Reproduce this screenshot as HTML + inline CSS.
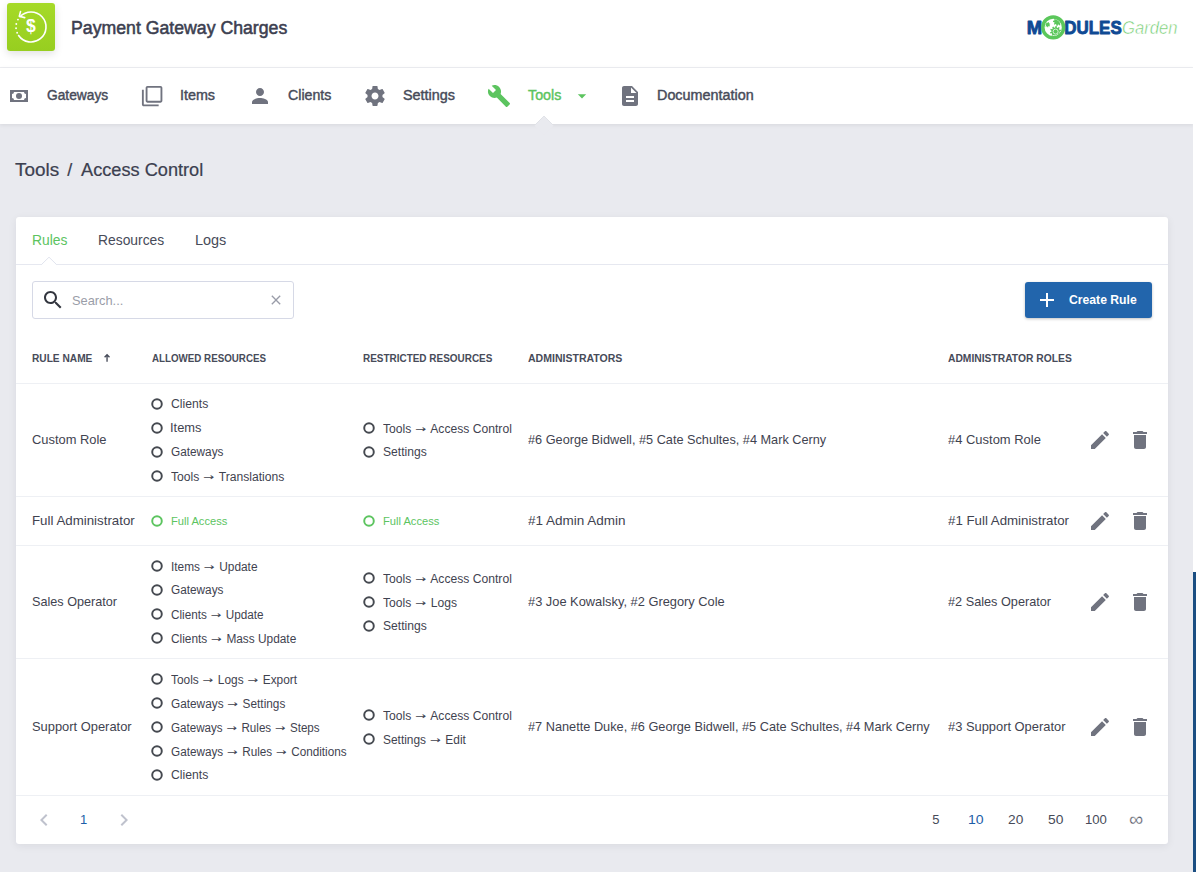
<!DOCTYPE html><html><head><meta charset="utf-8"><title>Payment Gateway Charges</title><style>

html,body{margin:0;padding:0}
body{width:1196px;height:872px;overflow:hidden;position:relative;background:#e9eaef;font-family:"Liberation Sans",sans-serif;}
.t{position:absolute;white-space:pre;line-height:20px;height:20px;}
.ic{position:absolute;display:block}
.ar{font-family:"DejaVu Sans",sans-serif;font-size:13px;display:inline-block;line-height:1;transform:scaleY(.72);transform-origin:50% 60%;vertical-align:baseline;letter-spacing:0;margin:0 1px 0 0.8px}
.abs{position:absolute}

</style></head><body>
<div class="abs" style="left:0;top:0;width:1193px;height:67px;background:#fff"></div>
<div class="abs" style="left:0;top:67px;width:1193px;height:1px;background:#eeeff3"></div>
<div class="abs" style="left:0;top:68px;width:1193px;height:56px;background:#fff;box-shadow:0 1px 4px rgba(30,32,45,.09)"></div>
<div class="abs" style="left:1193px;top:0;width:3px;height:572px;background:#fff"></div>
<div class="abs" style="left:1193px;top:572px;width:3px;height:300px;background:#1b4e82"></div>
<div class="abs" style="left:7px;top:3px;width:48px;height:48px;border-radius:3px;background:linear-gradient(#a6da28,#97ce20);box-shadow:0 3px 8px rgba(0,0,0,.12)"></div>
<svg class="ic" style="left:7px;top:3px" width="48" height="48" viewBox="0 0 48 48">
<path d="M13.03 13.77 A15 15 0 1 1 11.62 32.47" fill="none" stroke="#fff" stroke-width="1.6" stroke-linecap="round"/>
<circle cx="10.13" cy="29.72" r="0.95" fill="#fff"/><circle cx="9.06" cy="25.31" r="0.95" fill="#fff"/><circle cx="9.30" cy="21.01" r="0.95" fill="#fff"/><circle cx="10.96" cy="16.59" r="0.95" fill="#fff"/>
<path d="M13.500 8.600 L12.300 13.300 L17.700 14.600" fill="none" stroke="#fff" stroke-width="1.6" stroke-linecap="round" stroke-linejoin="round"/>
<text x="23.800" y="29.200" text-anchor="middle" font-family="Liberation Sans, sans-serif" font-weight="700" font-size="17.5" fill="#fff">$</text>
</svg>
<svg class="ic" style="left:1024px;top:12px" width="158" height="32" viewBox="0 0 158 32">
<defs><clipPath id="gc"><circle cx="29.200" cy="15.400" r="8.300"/></clipPath></defs>
<g font-family="Liberation Sans, sans-serif" font-weight="700" font-size="19.200" fill="#0f4a94" stroke="#0f4a94" stroke-width="0.9" stroke-linejoin="round">
<text x="2.700" y="21.600" textLength="15.400" lengthAdjust="spacingAndGlyphs">M</text>
<text x="40.300" y="21.600" textLength="57.400" lengthAdjust="spacingAndGlyphs">DULES</text>
</g>
<circle cx="29.200" cy="15.400" r="10.350" fill="#fff" stroke="#5bc75b" stroke-width="3.500"/>
<g clip-path="url(#gc)" fill="#5bc75b"><path d="M35.72 20.43L36.96 21.22L36.48 22.35L35.05 22.00L34.44 22.69L34.98 24.06L33.93 24.69L32.98 23.57L32.08 23.77L31.71 25.20L30.49 25.09L30.38 23.62L29.53 23.26L28.40 24.20L27.47 23.39L28.25 22.14L27.78 21.34L26.31 21.44L26.04 20.24L27.40 19.68L27.48 18.77L26.24 17.98L26.72 16.85L28.15 17.20L28.76 16.51L28.22 15.14L29.27 14.51L30.22 15.63L31.12 15.43L31.49 14.00L32.71 14.11L32.82 15.58L33.67 15.94L34.80 15.00L35.73 15.81L34.95 17.06L35.42 17.86L36.89 17.76L37.16 18.96L35.80 19.52z"/><path d="M36.98 9.64L38.10 10.24L37.74 11.30L36.49 11.09L35.97 11.73L36.45 12.91L35.49 13.49L34.67 12.53L33.85 12.69L33.46 13.90L32.35 13.73L32.34 12.46L31.61 12.06L30.54 12.73L29.80 11.89L30.61 10.91L30.30 10.14L29.05 9.96L29.02 8.84L30.27 8.61L30.54 7.82L29.69 6.88L30.39 6.01L31.49 6.63L32.20 6.20L32.16 4.93L33.26 4.71L33.70 5.90L34.52 6.03L35.30 5.03L36.29 5.57L35.86 6.76L36.41 7.39L37.65 7.12L38.06 8.17L36.96 8.81z"/><path d="M25.42 13.16L26.05 13.74L25.58 14.44L24.81 14.07L24.29 14.37L24.24 15.22L23.40 15.29L23.20 14.46L22.65 14.24L21.95 14.73L21.37 14.12L21.90 13.45L21.72 12.88L20.90 12.64L21.02 11.80L21.88 11.80L22.21 11.31L21.89 10.51L22.62 10.09L23.15 10.75L23.74 10.71L24.16 9.96L24.95 10.26L24.76 11.10L25.17 11.53L26.02 11.39L26.27 12.20L25.50 12.57z"/>
<circle cx="31.600" cy="19.600" r="2.500" fill="none" stroke="#fff" stroke-width="0.700"/></g>
<text x="98" y="21.800" font-family="Liberation Sans, sans-serif" font-style="italic" font-weight="400" font-size="18.500" fill="#6ecb6c" textLength="55.500" lengthAdjust="spacingAndGlyphs" stroke="#fff" stroke-width="0.550">Garden</text>
</svg>
<svg class="ic" style="left:7px;top:84px" width="24" height="24" viewBox="0 0 24 24"><path fill="#70737f" fill-rule="evenodd" d="M3 6h18v12H3zM7 8a2 2 0 0 1-2 2v4a2 2 0 0 1 2 2h10a2 2 0 0 1 2-2v-4a2 2 0 0 1-2-2z"/><circle cx="12" cy="12" r="3" fill="#70737f"/></svg>
<svg class="ic" style="left:141.2px;top:84.7px" width="22.3" height="22.3" viewBox="0 0 24 24"><path fill="#70737f" d="M3 5H1v16c0 1.100.9 2 2 2h16v-2H3V5zm18-4H7c-1.100 0-2 .9-2 2v14c0 1.100.9 2 2 2h14c1.100 0 2-.9 2-2V3c0-1.100-.9-2-2-2zm0 16H7V3h14v14z"/></svg>
<svg class="ic" style="left:247.8px;top:83.9px" width="24" height="24" viewBox="0 0 24 24"><path fill="#70737f" d="M12 12c2.21 0 4-1.79 4-4s-1.79-4-4-4-4 1.79-4 4 1.79 4 4 4zm0 2c-2.67 0-8 1.34-8 4v2h16v-2c0-2.66-5.33-4-8-4z"/></svg>
<svg class="ic" style="left:362.8px;top:83.7px" width="24" height="24" viewBox="0 0 24 24"><path fill="#70737f" d="M19.43 12.98c.04-.32.07-.64.07-.98s-.03-.66-.07-.98l2.11-1.65c.19-.15.24-.42.12-.64l-2-3.46c-.12-.22-.39-.3-.61-.22l-2.49 1c-.52-.4-1.08-.73-1.69-.98l-.38-2.65C14.46 2.18 14.25 2 14 2h-4c-.25 0-.46.18-.49.42l-.38 2.65c-.61.25-1.17.59-1.69.98l-2.49-1c-.23-.09-.49 0-.61.22l-2 3.46c-.13.22-.07.49.12.64l2.11 1.65c-.04.32-.07.65-.07.98s.03.66.07.98l-2.11 1.65c-.19.15-.24.42-.12.64l2 3.46c.12.22.39.3.61.22l2.49-1c.52.4 1.08.73 1.69.98l.38 2.65c.03.24.24.42.49.42h4c.25 0 .46-.18.49-.42l.38-2.65c.61-.25 1.17-.59 1.69-.98l2.49 1c.23.09.49 0 .61-.22l2-3.46c.12-.22.07-.49-.12-.64l-2.11-1.65zM12 15.5c-1.93 0-3.5-1.57-3.5-3.5s1.57-3.5 3.5-3.5 3.5 1.57 3.5 3.5-1.57 3.5-3.5 3.5z"/></svg>
<svg class="ic" style="left:486.5px;top:84px" width="24" height="24" viewBox="0 0 24 24"><path fill="#5cc45f" d="M22.7 19l-9.1-9.1c.9-2.3.4-5-1.5-6.9-2-2-5-2.4-7.400-1.300L9 6 6 9 1.600 4.700C.4 7.100.9 10.100 2.900 12.100c1.900 1.900 4.600 2.400 6.900 1.500l9.100 9.100c.4.400 1 .400 1.400 0l2.300-2.300c.5-.4.5-1.100.1-1.400z"/></svg>
<svg class="ic" style="left:571.5px;top:86px" width="20" height="20" viewBox="0 0 24 24"><path fill="#5cc45f" d="M7 10l5 5 5-5z"/></svg>
<svg class="ic" style="left:617.5px;top:84px" width="24" height="24" viewBox="0 0 24 24"><path fill="#70737f" d="M14 2H6c-1.100 0-1.990.9-1.990 2L4 20c0 1.100.89 2 1.990 2H18c1.100 0 2-.9 2-2V8l-6-6zm2 16H8v-2h8v2zm0-4H8v-2h8v2zm-3-5V3.500L18.500 9H13z"/></svg>
<svg class="ic" style="left:533px;top:114px" width="22" height="22" viewBox="0 0 22 22"><path d="M11 2.000L20.400 11.400L11 20.800L1.600 11.400z" fill="#e9eaef" stroke="#e9eaef" stroke-width="0.6" stroke-linejoin="round"/><path d="M1.600 11.400L11 2.000L20.400 11.400" fill="none" stroke="#dddfe5" stroke-width="0.8" stroke-linejoin="round"/></svg>
<div class="abs" style="left:16px;top:217px;width:1152px;height:627px;background:#fff;border-radius:3px;box-shadow:0 2px 8px rgba(30,32,45,.07)"></div>
<div class="abs" style="left:16px;top:264px;width:1152px;height:1px;background:#e6e8f0"></div>
<svg class="ic" style="left:40px;top:256px" width="18" height="9" viewBox="0 0 18 9"><path d="M1.500 9L9 1.500L16.500 9z" fill="#fff"/><path d="M1.500 8.500L9 1.200L16.500 8.500" fill="none" stroke="#e1e4ee" stroke-width="1"/></svg>
<div class="abs" style="left:32px;top:281px;width:260px;height:36px;border:1px solid #d6d9e6;border-radius:3px;background:#fff"></div>
<svg class="ic" style="left:40.9px;top:288.3px" width="24" height="24" viewBox="0 0 24 24"><path fill="#33363f" d="M15.500 14h-.79l-.28-.27C15.410 12.590 16 11.110 16 9.500 16 5.910 13.090 3 9.500 3S3 5.910 3 9.500 5.910 16 9.500 16c1.610 0 3.090-.59 4.230-1.570l.27.28v.79l5 4.990L20.490 19l-4.990-5zm-6 0C7.010 14 5 11.990 5 9.500S7.010 5 9.500 5 14 7.010 14 9.500 11.990 14 9.500 14z"/></svg>
<svg class="ic" style="left:268.3px;top:292.1px" width="16" height="16" viewBox="0 0 24 24"><path fill="#999ca8" d="M19 6.410L17.590 5 12 10.590 6.410 5 5 6.410 10.590 12 5 17.590 6.410 19 12 13.410 17.590 19 19 17.590 13.410 12z"/></svg>
<div class="abs" style="left:1025px;top:282px;width:127px;height:36px;border-radius:3px;background:#2265ac;box-shadow:0 1px 3px rgba(0,0,0,.25)"></div>
<svg class="ic" style="left:1034.7px;top:288px" width="24" height="24" viewBox="0 0 24 24"><path fill="#fff" d="M19 13h-6v6h-2v-6H5v-2h6V5h2v6h6v2z"/></svg>
<svg class="ic" style="left:100px;top:350px" width="14" height="14" viewBox="0 0 14 14"><path d="M7.050 11.800V4.700M4.600 7.300L7.050 4.700L9.500 7.300" fill="none" stroke="#474b59" stroke-width="1.350"/></svg>
<div class="abs" style="left:16px;top:383px;width:1152px;height:1px;background:#eef0f4"></div>
<div class="abs" style="left:16px;top:496px;width:1152px;height:1px;background:#eef0f4"></div>
<div class="abs" style="left:16px;top:545px;width:1152px;height:1px;background:#eef0f4"></div>
<div class="abs" style="left:16px;top:658px;width:1152px;height:1px;background:#eef0f4"></div>
<div class="abs" style="left:16px;top:795px;width:1152px;height:1px;background:#eef0f4"></div>
<svg class="ic" style="left:0;top:0" width="1196" height="872" viewBox="0 0 1196 872" fill="none" stroke-width="1.95">
<circle cx="157.0" cy="404.0" r="4.78" stroke="#454950"/>
<circle cx="157.0" cy="428.0" r="4.78" stroke="#454950"/>
<circle cx="157.0" cy="452.0" r="4.78" stroke="#454950"/>
<circle cx="157.0" cy="476.0" r="4.78" stroke="#454950"/>
<circle cx="369.0" cy="428.0" r="4.78" stroke="#454950"/>
<circle cx="369.0" cy="452.0" r="4.78" stroke="#454950"/>
<circle cx="157.0" cy="521.0" r="4.78" stroke="#5cc45f"/>
<circle cx="369.0" cy="521.0" r="4.78" stroke="#5cc45f"/>
<circle cx="157.0" cy="566.0" r="4.78" stroke="#454950"/>
<circle cx="157.0" cy="590.0" r="4.78" stroke="#454950"/>
<circle cx="157.0" cy="614.0" r="4.78" stroke="#454950"/>
<circle cx="157.0" cy="638.0" r="4.78" stroke="#454950"/>
<circle cx="369.0" cy="578.0" r="4.78" stroke="#454950"/>
<circle cx="369.0" cy="602.0" r="4.78" stroke="#454950"/>
<circle cx="369.0" cy="626.0" r="4.78" stroke="#454950"/>
<circle cx="157.0" cy="679.0" r="4.78" stroke="#454950"/>
<circle cx="157.0" cy="703.0" r="4.78" stroke="#454950"/>
<circle cx="157.0" cy="727.0" r="4.78" stroke="#454950"/>
<circle cx="157.0" cy="751.0" r="4.78" stroke="#454950"/>
<circle cx="157.0" cy="775.0" r="4.78" stroke="#454950"/>
<circle cx="369.0" cy="715.0" r="4.78" stroke="#454950"/>
<circle cx="369.0" cy="739.0" r="4.78" stroke="#454950"/>
</svg>
<svg class="ic" style="left:1087.7px;top:427.9px" width="24" height="24" viewBox="0 0 24 24"><path fill="#70737f" d="M3 17.250V21h3.750L17.810 9.940l-3.750-3.750L3 17.250zM20.710 7.040c.39-.39.39-1.020 0-1.410l-2.340-2.340c-.39-.39-1.020-.39-1.410 0l-1.830 1.830 3.750 3.750 1.830-1.830z"/></svg>
<svg class="ic" style="left:1127.8px;top:427.9px" width="24" height="24" viewBox="0 0 24 24"><path fill="#70737f" d="M6 19c0 1.100.9 2 2 2h8c1.100 0 2-.9 2-2V7H6v12zM19 4h-3.500l-1-1h-5l-1 1H5v2h14V4z"/></svg>
<svg class="ic" style="left:1087.7px;top:508.9px" width="24" height="24" viewBox="0 0 24 24"><path fill="#70737f" d="M3 17.250V21h3.750L17.810 9.940l-3.750-3.750L3 17.250zM20.710 7.040c.39-.39.39-1.020 0-1.410l-2.340-2.340c-.39-.39-1.020-.39-1.410 0l-1.830 1.830 3.750 3.750 1.830-1.830z"/></svg>
<svg class="ic" style="left:1127.8px;top:508.9px" width="24" height="24" viewBox="0 0 24 24"><path fill="#70737f" d="M6 19c0 1.100.9 2 2 2h8c1.100 0 2-.9 2-2V7H6v12zM19 4h-3.500l-1-1h-5l-1 1H5v2h14V4z"/></svg>
<svg class="ic" style="left:1087.7px;top:589.9px" width="24" height="24" viewBox="0 0 24 24"><path fill="#70737f" d="M3 17.250V21h3.750L17.810 9.940l-3.750-3.750L3 17.250zM20.710 7.040c.39-.39.39-1.020 0-1.410l-2.340-2.340c-.39-.39-1.020-.39-1.410 0l-1.830 1.830 3.750 3.750 1.830-1.830z"/></svg>
<svg class="ic" style="left:1127.8px;top:589.9px" width="24" height="24" viewBox="0 0 24 24"><path fill="#70737f" d="M6 19c0 1.100.9 2 2 2h8c1.100 0 2-.9 2-2V7H6v12zM19 4h-3.500l-1-1h-5l-1 1H5v2h14V4z"/></svg>
<svg class="ic" style="left:1087.7px;top:714.9px" width="24" height="24" viewBox="0 0 24 24"><path fill="#70737f" d="M3 17.250V21h3.750L17.810 9.940l-3.750-3.750L3 17.250zM20.710 7.040c.39-.39.39-1.020 0-1.410l-2.340-2.340c-.39-.39-1.020-.39-1.410 0l-1.830 1.830 3.750 3.750 1.830-1.830z"/></svg>
<svg class="ic" style="left:1127.8px;top:714.9px" width="24" height="24" viewBox="0 0 24 24"><path fill="#70737f" d="M6 19c0 1.100.9 2 2 2h8c1.100 0 2-.9 2-2V7H6v12zM19 4h-3.500l-1-1h-5l-1 1H5v2h14V4z"/></svg>
<svg class="ic" style="left:32px;top:808.2px" width="24" height="24" viewBox="0 0 24 24"><path fill="#bfc2cd" d="M15.410 7.410L14 6l-6 6 6 6 1.410-1.410L10.830 12z"/></svg>
<svg class="ic" style="left:111.8px;top:808.2px" width="24" height="24" viewBox="0 0 24 24"><path fill="#bfc2cd" d="M10 6L8.590 7.410 13.170 12l-4.580 4.590L10 18l6-6z"/></svg>
<span class="t" id="t0" style="left:70.65px;top:18.00px;font-size:18px;font-weight:400;-webkit-text-stroke:0.03em currentColor;color:#3c4050;letter-spacing:0.000px;transform:scaleX(0.9826);transform-origin:0 50%;">Payment Gateway Charges</span>
<span class="t" id="t1" style="left:47.21px;top:85.00px;font-size:14px;font-weight:400;-webkit-text-stroke:0.03em currentColor;color:#474b59;letter-spacing:0.000px;transform:scaleX(0.9830);transform-origin:0 50%;">Gateways</span>
<span class="t" id="t2" style="left:180.11px;top:85.00px;font-size:14px;font-weight:400;-webkit-text-stroke:0.03em currentColor;color:#474b59;letter-spacing:0.000px;transform:scaleX(1.0234);transform-origin:0 50%;">Items</span>
<span class="t" id="t3" style="left:288.12px;top:85.00px;font-size:14px;font-weight:400;-webkit-text-stroke:0.03em currentColor;color:#474b59;letter-spacing:0.000px;transform:scaleX(1.0122);transform-origin:0 50%;">Clients</span>
<span class="t" id="t4" style="left:402.96px;top:85.00px;font-size:14px;font-weight:400;-webkit-text-stroke:0.03em currentColor;color:#474b59;letter-spacing:0.000px;transform:scaleX(1.0275);transform-origin:0 50%;">Settings</span>
<span class="t" id="t5" style="left:527.71px;top:85.00px;font-size:14px;font-weight:400;-webkit-text-stroke:0.03em currentColor;color:#5cc45f;letter-spacing:0.000px;transform:scaleX(1.0190);transform-origin:0 50%;">Tools</span>
<span class="t" id="t6" style="left:656.80px;top:85.00px;font-size:14px;font-weight:400;-webkit-text-stroke:0.03em currentColor;color:#474b59;letter-spacing:0.000px;transform:scaleX(1.0263);transform-origin:0 50%;">Documentation</span>
<span class="t" id="t7" style="left:14.67px;top:160.00px;font-size:18px;font-weight:400;-webkit-text-stroke:0.012em currentColor;color:#3c4050;letter-spacing:0.000px;transform:scaleX(1.0511);transform-origin:0 50%;">Tools</span>
<span class="t" id="t8" style="left:67.37px;top:160.00px;font-size:18px;font-weight:400;-webkit-text-stroke:0.012em currentColor;color:#3c4050;letter-spacing:0.000px;">/</span>
<span class="t" id="t9" style="left:80.94px;top:160.00px;font-size:18px;font-weight:400;-webkit-text-stroke:0.012em currentColor;color:#3c4050;letter-spacing:0.000px;transform:scaleX(1.0102);transform-origin:0 50%;">Access Control</span>
<span class="t" id="t10" style="left:32.02px;top:230.00px;font-size:14px;font-weight:400;color:#5cc45f;letter-spacing:0.000px;transform:scaleX(0.9903);transform-origin:0 50%;">Rules</span>
<span class="t" id="t11" style="left:98.01px;top:230.00px;font-size:14px;font-weight:400;color:#474b59;letter-spacing:0.000px;transform:scaleX(0.9892);transform-origin:0 50%;">Resources</span>
<span class="t" id="t12" style="left:195.37px;top:230.00px;font-size:14px;font-weight:400;color:#474b59;letter-spacing:0.000px;transform:scaleX(1.0320);transform-origin:0 50%;">Logs</span>
<span class="t" id="t13" style="left:71.60px;top:291.00px;font-size:13px;font-weight:400;color:#9a9da8;letter-spacing:0.000px;transform:scaleX(0.9861);transform-origin:0 50%;">Search...</span>
<span class="t" id="t14" style="left:1068.64px;top:290.00px;font-size:13px;font-weight:700;color:#ffffff;letter-spacing:0.000px;transform:scaleX(0.9366);transform-origin:0 50%;">Create Rule</span>
<span class="t" id="t15" style="left:31.55px;top:348.00px;font-size:11px;font-weight:700;color:#474b59;letter-spacing:0.000px;transform:scaleX(0.9233);transform-origin:0 50%;">RULE NAME</span>
<span class="t" id="t16" style="left:151.58px;top:348.00px;font-size:11px;font-weight:700;color:#474b59;letter-spacing:0.000px;transform:scaleX(0.8885);transform-origin:0 50%;">ALLOWED RESOURCES</span>
<span class="t" id="t17" style="left:363.15px;top:348.00px;font-size:11px;font-weight:700;color:#474b59;letter-spacing:0.000px;transform:scaleX(0.9043);transform-origin:0 50%;">RESTRICTED RESOURCES</span>
<span class="t" id="t18" style="left:528.10px;top:348.00px;font-size:11px;font-weight:700;color:#474b59;letter-spacing:0.000px;transform:scaleX(0.9571);transform-origin:0 50%;">ADMINISTRATORS</span>
<span class="t" id="t19" style="left:947.54px;top:348.00px;font-size:11px;font-weight:700;color:#474b59;letter-spacing:0.000px;transform:scaleX(0.9360);transform-origin:0 50%;">ADMINISTRATOR ROLES</span>
<span class="t" id="t20" style="left:32.13px;top:430.00px;font-size:13px;font-weight:400;color:#3f4350;letter-spacing:0.000px;transform:scaleX(0.9909);transform-origin:0 50%;">Custom Role</span>
<span class="t" id="t21" style="left:171.35px;top:394.00px;font-size:12px;font-weight:400;color:#3f4350;letter-spacing:0.000px;transform:scaleX(1.0151);transform-origin:0 50%;">Clients</span>
<span class="t" id="t22" style="left:170.10px;top:418.00px;font-size:12px;font-weight:400;color:#3f4350;letter-spacing:0.000px;transform:scaleX(1.0736);transform-origin:0 50%;">Items</span>
<span class="t" id="t23" style="left:171.14px;top:442.00px;font-size:12px;font-weight:400;color:#3f4350;letter-spacing:0.000px;transform:scaleX(0.9837);transform-origin:0 50%;">Gateways</span>
<span class="t" id="t24" style="left:170.95px;top:467.00px;font-size:12px;font-weight:400;color:#3f4350;letter-spacing:0.000px;transform:scaleX(1.0114);transform-origin:0 50%;">Tools <span class="ar">→</span> Translations</span>
<span class="t" id="t25" style="left:383.15px;top:419.00px;font-size:12px;font-weight:400;color:#3f4350;letter-spacing:0.000px;transform:scaleX(1.0111);transform-origin:0 50%;">Tools <span class="ar">→</span> Access Control</span>
<span class="t" id="t26" style="left:382.79px;top:442.00px;font-size:12px;font-weight:400;color:#3f4350;letter-spacing:0.000px;transform:scaleX(1.0092);transform-origin:0 50%;">Settings</span>
<span class="t" id="t27" style="left:528.37px;top:430.00px;font-size:13px;font-weight:400;color:#3f4350;letter-spacing:0.000px;transform:scaleX(0.9780);transform-origin:0 50%;">#6 George Bidwell, #5 Cate Schultes, #4 Mark Cerny</span>
<span class="t" id="t28" style="left:948.48px;top:430.00px;font-size:13px;font-weight:400;color:#3f4350;letter-spacing:0.000px;transform:scaleX(0.9964);transform-origin:0 50%;">#4 Custom Role</span>
<span class="t" id="t29" style="left:31.81px;top:511.00px;font-size:13px;font-weight:400;color:#3f4350;letter-spacing:0.000px;transform:scaleX(1.0229);transform-origin:0 50%;">Full Administrator</span>
<span class="t" id="t30" style="left:170.68px;top:511.00px;font-size:11px;font-weight:400;color:#5cc45f;letter-spacing:0.000px;transform:scaleX(1.0121);transform-origin:0 50%;">Full Access</span>
<span class="t" id="t31" style="left:382.68px;top:511.00px;font-size:11px;font-weight:400;color:#5cc45f;letter-spacing:0.000px;transform:scaleX(1.0121);transform-origin:0 50%;">Full Access</span>
<span class="t" id="t32" style="left:528.46px;top:511.00px;font-size:13px;font-weight:400;color:#3f4350;letter-spacing:0.000px;transform:scaleX(1.0385);transform-origin:0 50%;">#1 Admin Admin</span>
<span class="t" id="t33" style="left:948.05px;top:511.00px;font-size:13px;font-weight:400;color:#3f4350;letter-spacing:0.000px;transform:scaleX(1.0210);transform-origin:0 50%;">#1 Full Administrator</span>
<span class="t" id="t34" style="left:31.64px;top:592.00px;font-size:13px;font-weight:400;color:#3f4350;letter-spacing:0.000px;transform:scaleX(0.9727);transform-origin:0 50%;">Sales Operator</span>
<span class="t" id="t35" style="left:170.86px;top:557.00px;font-size:12px;font-weight:400;color:#3f4350;letter-spacing:0.000px;transform:scaleX(0.9896);transform-origin:0 50%;">Items <span class="ar">→</span> Update</span>
<span class="t" id="t36" style="left:171.14px;top:580.00px;font-size:12px;font-weight:400;color:#3f4350;letter-spacing:0.000px;transform:scaleX(0.9837);transform-origin:0 50%;">Gateways</span>
<span class="t" id="t37" style="left:171.35px;top:605.00px;font-size:12px;font-weight:400;color:#3f4350;letter-spacing:0.000px;transform:scaleX(0.9771);transform-origin:0 50%;">Clients <span class="ar">→</span> Update</span>
<span class="t" id="t38" style="left:171.27px;top:629.00px;font-size:12px;font-weight:400;color:#3f4350;letter-spacing:0.000px;transform:scaleX(0.9881);transform-origin:0 50%;">Clients <span class="ar">→</span> Mass Update</span>
<span class="t" id="t39" style="left:383.15px;top:569.00px;font-size:12px;font-weight:400;color:#3f4350;letter-spacing:0.000px;transform:scaleX(1.0111);transform-origin:0 50%;">Tools <span class="ar">→</span> Access Control</span>
<span class="t" id="t40" style="left:382.95px;top:593.00px;font-size:12px;font-weight:400;color:#3f4350;letter-spacing:0.000px;transform:scaleX(1.0088);transform-origin:0 50%;">Tools <span class="ar">→</span> Logs</span>
<span class="t" id="t41" style="left:382.79px;top:616.00px;font-size:12px;font-weight:400;color:#3f4350;letter-spacing:0.000px;transform:scaleX(1.0092);transform-origin:0 50%;">Settings</span>
<span class="t" id="t42" style="left:528.26px;top:592.00px;font-size:13px;font-weight:400;color:#3f4350;letter-spacing:0.000px;transform:scaleX(0.9878);transform-origin:0 50%;">#3 Joe Kowalsky, #2 Gregory Cole</span>
<span class="t" id="t43" style="left:948.48px;top:592.00px;font-size:13px;font-weight:400;color:#3f4350;letter-spacing:0.000px;transform:scaleX(0.9770);transform-origin:0 50%;">#2 Sales Operator</span>
<span class="t" id="t44" style="left:32.00px;top:717.00px;font-size:13px;font-weight:400;color:#3f4350;letter-spacing:0.000px;transform:scaleX(0.9917);transform-origin:0 50%;">Support Operator</span>
<span class="t" id="t45" style="left:170.96px;top:670.00px;font-size:12px;font-weight:400;color:#3f4350;letter-spacing:0.000px;transform:scaleX(0.9888);transform-origin:0 50%;">Tools <span class="ar">→</span> Logs <span class="ar">→</span> Export</span>
<span class="t" id="t46" style="left:171.43px;top:694.00px;font-size:12px;font-weight:400;color:#3f4350;letter-spacing:0.000px;transform:scaleX(0.9846);transform-origin:0 50%;">Gateways <span class="ar">→</span> Settings</span>
<span class="t" id="t47" style="left:171.01px;top:718.00px;font-size:12px;font-weight:400;color:#3f4350;letter-spacing:0.000px;transform:scaleX(0.9684);transform-origin:0 50%;">Gateways <span class="ar">→</span> Rules <span class="ar">→</span> Steps</span>
<span class="t" id="t48" style="left:171.01px;top:742.00px;font-size:12px;font-weight:400;color:#3f4350;letter-spacing:0.000px;transform:scaleX(0.9786);transform-origin:0 50%;">Gateways <span class="ar">→</span> Rules <span class="ar">→</span> Conditions</span>
<span class="t" id="t49" style="left:171.35px;top:765.00px;font-size:12px;font-weight:400;color:#3f4350;letter-spacing:0.000px;transform:scaleX(1.0151);transform-origin:0 50%;">Clients</span>
<span class="t" id="t50" style="left:383.15px;top:706.00px;font-size:12px;font-weight:400;color:#3f4350;letter-spacing:0.000px;transform:scaleX(1.0111);transform-origin:0 50%;">Tools <span class="ar">→</span> Access Control</span>
<span class="t" id="t51" style="left:382.84px;top:730.00px;font-size:12px;font-weight:400;color:#3f4350;letter-spacing:0.000px;transform:scaleX(0.9931);transform-origin:0 50%;">Settings <span class="ar">→</span> Edit</span>
<span class="t" id="t52" style="left:528.46px;top:717.00px;font-size:13px;font-weight:400;color:#3f4350;letter-spacing:0.000px;transform:scaleX(0.9804);transform-origin:0 50%;">#7 Nanette Duke, #6 George Bidwell, #5 Cate Schultes, #4 Mark Cerny</span>
<span class="t" id="t53" style="left:948.48px;top:717.00px;font-size:13px;font-weight:400;color:#3f4350;letter-spacing:0.000px;transform:scaleX(0.9909);transform-origin:0 50%;">#3 Support Operator</span>
<span class="t" id="t54" style="left:79.97px;top:810.00px;font-size:13px;font-weight:400;color:#1d5ea8;letter-spacing:0.000px;">1</span>
<span class="t" id="t55" style="left:932.22px;top:810.00px;font-size:13px;font-weight:400;color:#474b59;letter-spacing:0.000px;">5</span>
<span class="t" id="t56" style="left:968.15px;top:810.00px;font-size:13px;font-weight:400;color:#1d5ea8;letter-spacing:0.000px;transform:scaleX(1.0799);transform-origin:0 50%;">10</span>
<span class="t" id="t57" style="left:1008.14px;top:810.00px;font-size:13px;font-weight:400;color:#474b59;letter-spacing:0.000px;transform:scaleX(1.0548);transform-origin:0 50%;">20</span>
<span class="t" id="t58" style="left:1048.35px;top:810.00px;font-size:13px;font-weight:400;color:#474b59;letter-spacing:0.000px;transform:scaleX(1.0647);transform-origin:0 50%;">50</span>
<span class="t" id="t59" style="left:1085.04px;top:810.00px;font-size:13px;font-weight:400;color:#474b59;letter-spacing:0.000px;transform:scaleX(1.0107);transform-origin:0 50%;">100</span>
<span class="t" id="t60" style="left:1128.90px;top:809.00px;font-size:13px;font-weight:400;color:#474b59;letter-spacing:0.000px;font-size:20px;-webkit-text-stroke:0.35px #fff;">∞</span>
</body></html>
